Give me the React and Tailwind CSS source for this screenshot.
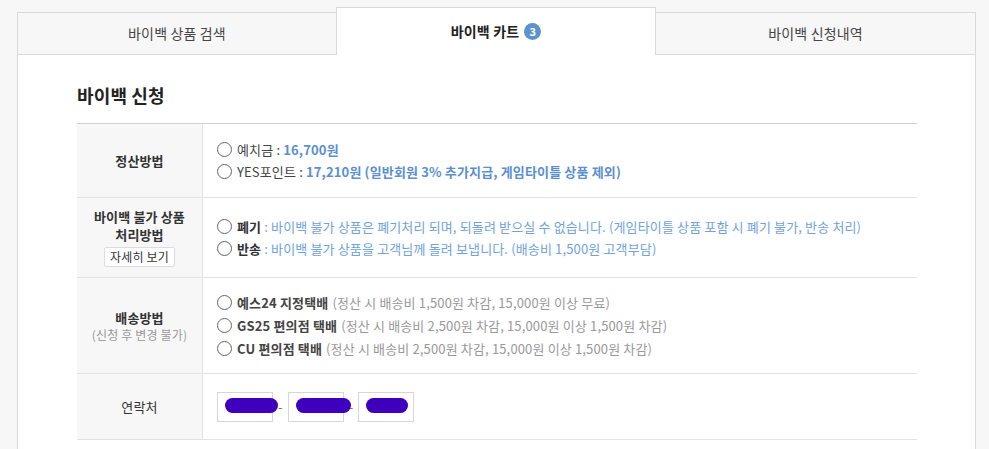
const font = { fontFamily: '"Noto Sans CJK KR", "Noto Sans", sans-serif' };

function Radio() {
  return (
    <span className="inline-block w-[15px] h-[15px] rounded-full border border-[#666] bg-white shrink-0 mr-[5px]" />
  );
}

function Row({ label, height, children }) {
  return (
    <div className={`flex border-b border-[#e3e3e3] ${height}`}>
      <div className="w-[126px] shrink-0 bg-[#f7f7f7] border-r border-[#e3e3e3] flex flex-col items-center justify-center text-center">
        {label}
      </div>
      <div className="flex-1 flex flex-col justify-center pl-[14px]">{children}</div>
    </div>
  );
}

function Opt({ children }) {
  return <div className="flex items-center h-[22px] leading-none whitespace-nowrap">{children}</div>;
}

function Masked({ w }) {
  return (
    <div className="relative w-[56px] h-[30px] border border-[#d6d6d6] bg-white">
      <span className={`absolute top-[5px] left-[7px] h-[15px] rounded-full bg-[#3f00bd] ${w}`} />
    </div>
  );
}

export default function App() {
  return (
    <div className="min-h-screen bg-[#f7f7f7] pt-[7px] pl-[17px] pr-[13px] text-[13px] text-[#333] tracking-[0.15px]" style={font}>
      <div className="flex items-end">
        <div className="w-[319px] h-[43px] border border-[#d9d9d9] border-r-0 bg-[#f7f7f7] flex items-center justify-center text-[14px] text-[#444]">
          바이백 상품 검색
        </div>
        <div className="w-[320px] h-[48px] border-t border-x border-[#d9d9d9] bg-white flex items-center justify-center gap-[5px] text-[14px] font-bold text-[#222] pb-[1px]">
          바이백 카트
          <span className="w-[17px] h-[17px] rounded-full bg-[#5b93cf] text-white text-[11px] font-bold flex items-center justify-center leading-none">
            3
          </span>
        </div>
        <div className="flex-1 h-[43px] border border-[#d9d9d9] border-l-0 bg-[#f7f7f7] flex items-center justify-center text-[14px] text-[#444]">
          바이백 신청내역
        </div>
      </div>
      <div className="bg-white border-x border-[#d9d9d9] pl-[59px] pr-[58px] pt-[27px] min-h-[400px]">
        <h2 className="text-[18px] font-bold text-[#222] leading-[26px] mb-[15px]">바이백 신청</h2>
        <div className="border-t border-[#d2d2d2]">
          <Row label={<span className="font-bold text-[#333]">정산방법</span>} height="h-[74px]">
            <Opt>
              <Radio />
              <span className="text-[#444]">예치금 : </span>
              <span className="text-[#5b8fd0] font-bold ml-[3px]">16,700원</span>
            </Opt>
            <Opt>
              <Radio />
              <span className="text-[#444]">YES포인트 : </span>
              <span className="text-[#5b8fd0] font-bold ml-[3px]">17,210원 (일반회원 3% 추가지급, 게임타이틀 상품 제외)</span>
            </Opt>
          </Row>
          <Row
            label={
              <>
                <span className="font-bold text-[#333] leading-[18px]">바이백 불가 상품</span>
                <span className="font-bold text-[#333] leading-[18px]">처리방법</span>
                <span className="mt-[3px] px-[5px] h-[20px] border border-[#ddd] bg-white text-[12px] text-[#333] flex items-center rounded-[2px]">
                  자세히 보기
                </span>
              </>
            }
            height="h-[80px]"
          >
            <Opt>
              <Radio />
              <span className="font-bold text-[#333]">폐기</span>
              <span className="text-[#6fa3dc] ml-[3px]">
                : 바이백 불가 상품은 폐기처리 되며, 되돌려 받으실 수 없습니다. (게임타이틀 상품 포함 시 폐기 불가, 반송 처리)
              </span>
            </Opt>
            <Opt>
              <Radio />
              <span className="font-bold text-[#333]">반송</span>
              <span className="text-[#6fa3dc] ml-[3px]">: 바이백 불가 상품을 고객님께 돌려 보냅니다. (배송비 1,500원 고객부담)</span>
            </Opt>
          </Row>
          <Row
            label={
              <>
                <span className="font-bold text-[#333] leading-[18px]">배송방법</span>
                <span className="text-[#999] text-[12px] leading-[16px]">(신청 후 변경 불가)</span>
              </>
            }
            height="h-[96px]"
          >
            <div className="flex flex-col gap-[1px]">
              <Opt>
                <Radio />
                <span className="font-bold text-[#444]">예스24 지정택배</span>
                <span className="text-[#999] ml-[4px]">(정산 시 배송비 1,500원 차감, 15,000원 이상 무료)</span>
              </Opt>
              <Opt>
                <Radio />
                <span className="font-bold text-[#444]">GS25 편의점 택배</span>
                <span className="text-[#999] ml-[4px]">(정산 시 배송비 2,500원 차감, 15,000원 이상 1,500원 차감)</span>
              </Opt>
              <Opt>
                <Radio />
                <span className="font-bold text-[#444]">CU 편의점 택배</span>
                <span className="text-[#999] ml-[4px]">(정산 시 배송비 2,500원 차감, 15,000원 이상 1,500원 차감)</span>
              </Opt>
            </div>
          </Row>
          <Row label={<span className="text-[#333]">연락처</span>} height="h-[66px]">
            <div className="flex items-center gap-[5px] text-[#777]">
              <Masked w="w-[53px]" />
              <span>-</span>
              <Masked w="w-[55px]" />
              <span>-</span>
              <Masked w="w-[42px]" />
            </div>
          </Row>
        </div>
      </div>
    </div>
  );
}
